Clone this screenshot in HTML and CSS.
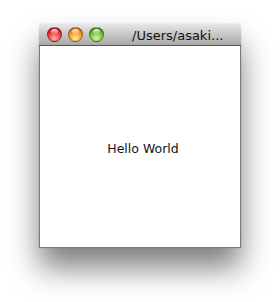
FILE: index.html
```html
<!DOCTYPE html>
<html>
<head>
<meta charset="utf-8">
<link rel="stylesheet" href="styles.css">
</head>
<body>
<div class="window">
  <div class="titlebar">
    <div class="lights">
      <span class="light red"></span>
      <span class="light orange"></span>
      <span class="light green"></span>
    </div>
    <div class="title">/Users/asaki...</div>
  </div>
  <div class="content">
    <span class="hello">Hello World</span>
  </div>
</div>
</body>
</html>
```
FILE: styles.css
```css
html, body {
  margin: 0;
  padding: 0;
  background: #fff;
}
body {
  width: 280px;
  height: 302px;
  overflow: hidden;
  padding: 24px 0 0 39px;
  box-sizing: border-box;
  font-family: "DejaVu Sans", "Liberation Sans", sans-serif;
}
.window {
  width: 202px;
  height: 224px;
  display: flex;
  flex-direction: column;
  border-radius: 4px 4px 0 0;
  box-shadow: 0 20px 30px rgba(0,0,0,0.5), 0 0 1px rgba(0,0,0,0.4);
  background: #fff;
}
.titlebar {
  height: 21px;
  flex: none;
  display: flex;
  align-items: center;
  border-radius: 4px 4px 0 0;
  background: linear-gradient(#e8e8e8, #c6c6c6 50%, #a8a8a8);
  border-bottom: 1px solid #555;
  padding-left: 8px;
  box-sizing: content-box;
}
.lights {
  display: flex;
  gap: 6px;
}
.light {
  position: relative;
  width: 15px;
  height: 15px;
  border-radius: 50%;
  box-sizing: border-box;
  border: 1px solid rgba(0,0,0,0.35);
}
.light::after {
  content: "";
  position: absolute;
  left: 3px;
  top: 1px;
  width: 7px;
  height: 5px;
  border-radius: 50%;
  background: linear-gradient(rgba(255,255,255,0.85), rgba(255,255,255,0.1));
}
.red {
  background: radial-gradient(circle at 50% 80%, #ffb8b0 0%, #f24848 45%, #b8000f 100%);
}
.orange {
  background: radial-gradient(circle at 50% 80%, #ffeaa0 0%, #f8a43a 45%, #c05c00 100%);
}
.green {
  background: radial-gradient(circle at 50% 80%, #d8f8a0 0%, #80c84c 45%, #347c12 100%);
}
.title {
  margin-left: 28px;
  font-size: 13px;
  color: #111;
  white-space: nowrap;
  padding-top: 1px;
}
.content {
  flex: 1;
  display: flex;
  align-items: center;
  justify-content: center;
  border: 1px solid #7a7a7a;
  border-top: none;
  padding: 4px 0 0 6px;
}
.hello {
  font-size: 12.5px;
  color: #111;
}
```
